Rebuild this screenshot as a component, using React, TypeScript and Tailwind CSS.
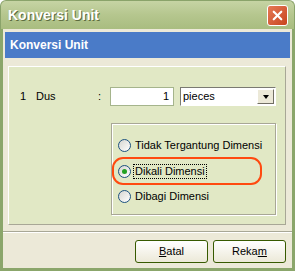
import { X } from "lucide-react";

const font = { fontFamily: "Tahoma, 'Liberation Sans', Arial, sans-serif" };

function Radio({ checked, label, focused }: { checked?: boolean; label: string; focused?: boolean }) {
  return (
    <div className="flex items-center h-[25.5px]">
      <div className="w-[13px] h-[13px] rounded-full border border-[#1c5180] bg-gradient-to-br from-[#d6d6d0] to-white flex items-center justify-center">
        {checked && <div className="w-[5px] h-[5px] rounded-full bg-[#21a121]" />}
      </div>
      <span
        className={
          "ml-[3px] px-[1px] text-[11px] text-black leading-[13px] " +
          (focused ? "outline outline-1 outline-dotted outline-black" : "")
        }
      >
        {label}
      </span>
    </div>
  );
}

function XpButton({ children }: { children: React.ReactNode }) {
  return (
    <button className="w-[73px] h-[23px] rounded-[3px] border border-[#375a00] bg-gradient-to-b from-white to-[#ece9d8] text-[11px] text-black">
      {children}
    </button>
  );
}

export default function App() {
  return (
    <div className="w-[295px] h-[271px] flex flex-col overflow-hidden" style={font}>
      {/* Title bar */}
      <div className="h-[29px] flex items-center justify-between pl-[7px] pr-[6px] rounded-t-[6px] bg-gradient-to-b from-[#c6d4a4] via-[#b5c68e] to-[#a9bd80] border-x border-t border-[#8aa36a]">
        <span className="text-white font-bold text-[14px] [text-shadow:1px_1px_0_#5b6b3e]">Konversi Unit</span>
        <div className="w-[21px] h-[21px] rounded-[3px] border border-white bg-gradient-to-br from-[#e57a55] to-[#c8431c] flex items-center justify-center">
          <X className="w-[15px] h-[15px] text-white" strokeWidth={3.5} />
        </div>
      </div>

      {/* Body */}
      <div className="flex-1 flex flex-col bg-[#ece9d8] border-x-[3px] border-b-[3px] border-[#8ba66b]">
        <div className="mx-[2px] mt-[3px] h-[26px] bg-[#4a7bc8] flex items-center pl-[5px]">
          <span className="text-white font-bold text-[12px]">Konversi Unit</span>
        </div>

        {/* Panel */}
        <div className="ml-[5px] mr-[6px] mt-[8px] h-[159px] bg-[#e1e8c5] border-t border-l border-white border-r border-b border-r-[#a8a796] border-b-[#a8a796] relative">
          <div className="flex items-center mt-[20px] h-[19px] text-[11px] text-black">
            <span className="ml-[11px] w-[16px]">1</span>
            <span className="w-[62px]">Dus</span>
            <span className="w-[12px]">:</span>
            <div className="w-[64px] h-[19px] bg-white border border-[#a5b48c] text-right pr-[4px] leading-[17px]">1</div>
            <div className="ml-[6px] w-[96px] h-[19px] bg-white border border-t-[#7a7a72] border-l-[#7a7a72] border-r-white border-b-white flex items-center">
              <span className="flex-1 pl-[2px]">pieces</span>
              <div className="w-[17px] h-[15px] mr-[1px] bg-[#ece9d8] border border-t-white border-l-white border-r-[#716f64] border-b-[#716f64] flex items-center justify-center">
                <div className="w-0 h-0 border-x-[3.5px] border-x-transparent border-t-[4px] border-t-black" />
              </div>
            </div>
          </div>

          {/* Group box */}
          <div className="ml-[102px] mt-[17px] w-[165px] h-[92px] border border-[#a8a796] shadow-[inset_1px_1px_0_white,1px_1px_0_white] relative">
            <div className="flex flex-col pl-[6px] pt-[9px]">
              <Radio label="Tidak Tergantung Dimensi" />
              <Radio label="Dikali Dimensi" checked focused />
              <Radio label="Dibagi Dimensi" />
            </div>
            <div className="absolute left-[0px] top-[33px] w-[150px] h-[28px] rounded-[11px] border-2 border-[#ff4a10]" />
          </div>
        </div>

        <div className="mt-[6px] h-[2px] border-t border-[#a8a796] border-b border-b-white" />

        {/* Footer */}
        <div className="flex-1 flex justify-end items-start pt-[7px] pr-[6px] gap-[5px]">
          <XpButton>
            <span className="underline">B</span>atal
          </XpButton>
          <XpButton>
            Reka<span className="underline">m</span>
          </XpButton>
        </div>
      </div>
    </div>
  );
}
